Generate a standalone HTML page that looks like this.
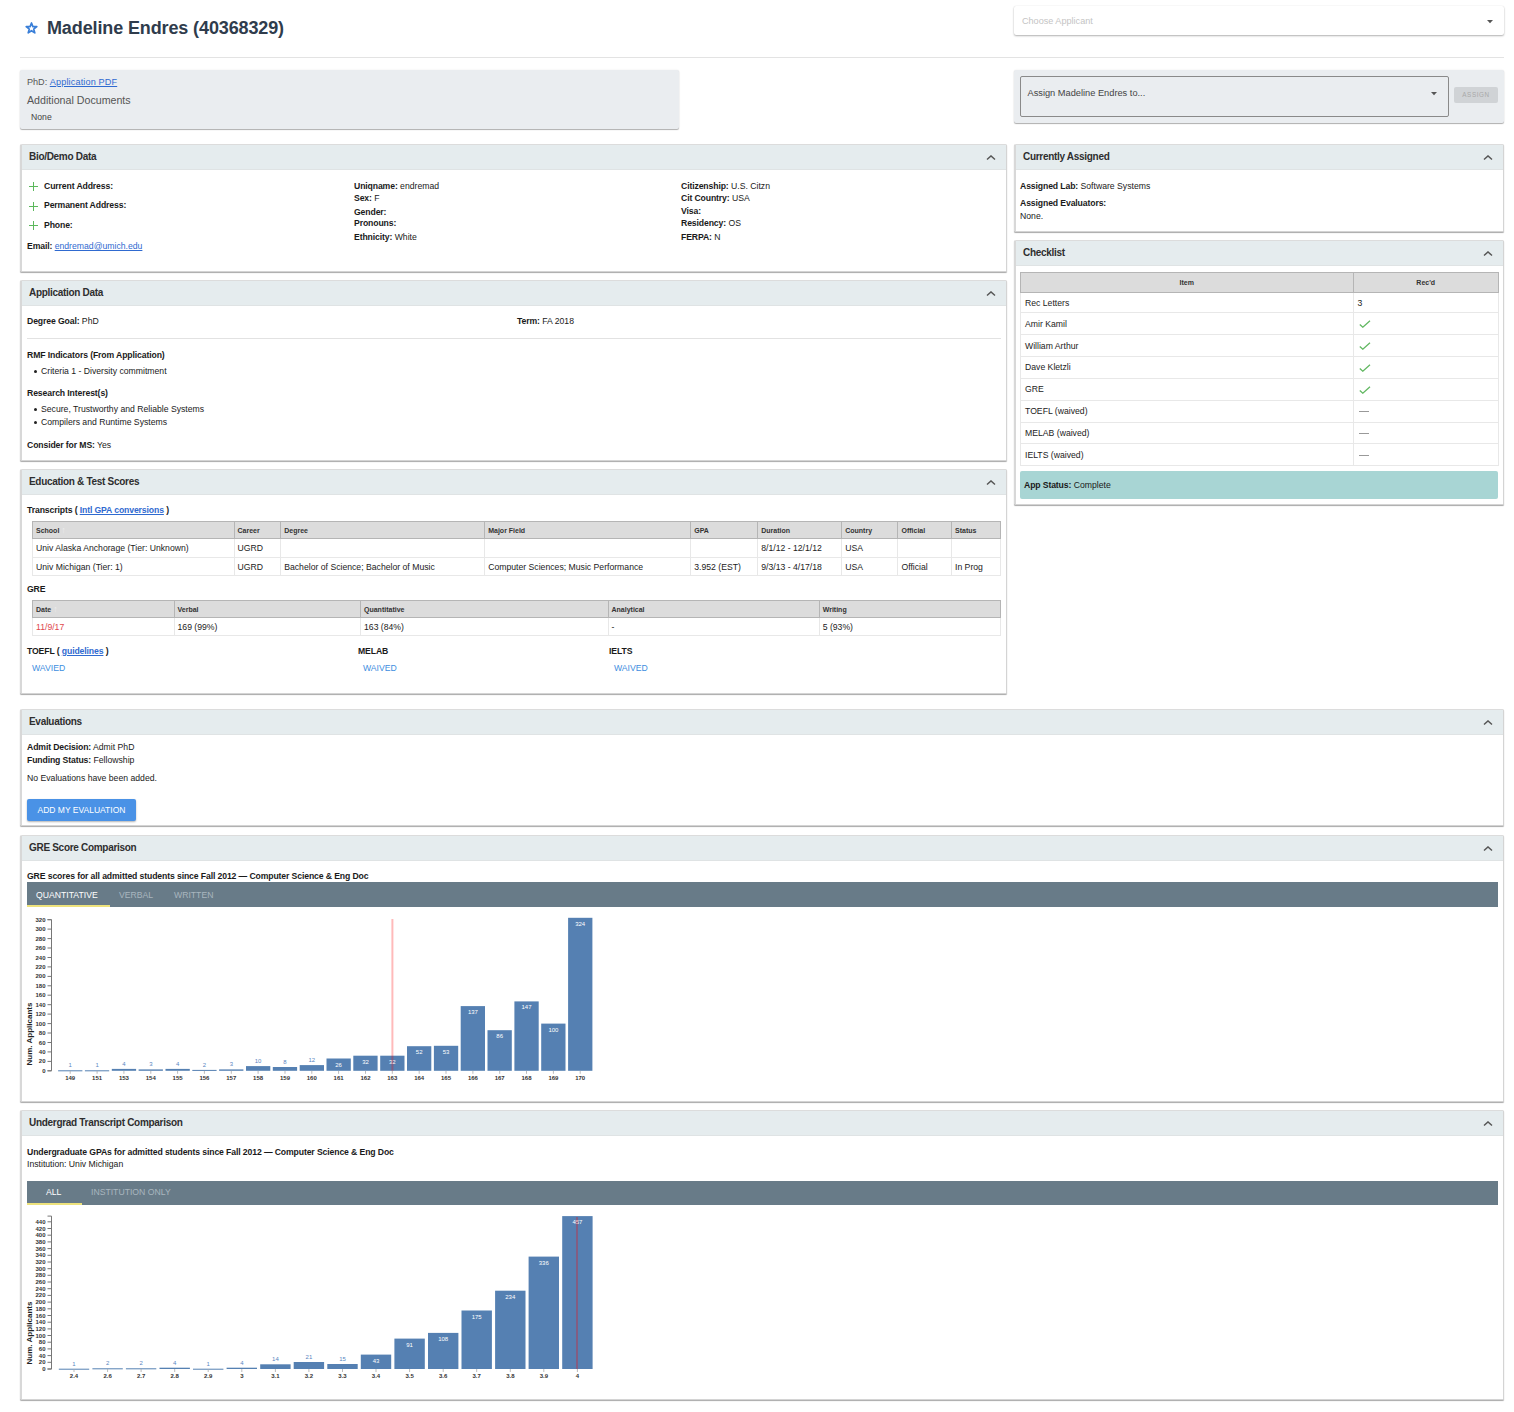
<!DOCTYPE html>
<html><head><meta charset="utf-8">
<style>
*{box-sizing:border-box;margin:0;padding:0}
html,body{width:1514px;height:1412px;overflow:hidden;background:#fff}
body{font-family:"Liberation Sans",sans-serif;color:#1a1a1a;font-size:8.67px;position:relative}
.a{position:absolute}
.t{position:absolute;white-space:nowrap;line-height:12px}
.b,b{font-weight:bold;letter-spacing:-.12px}
.lk{color:#2a64c8;text-decoration:underline}
.card{position:absolute;background:#fff;border:1px solid #d4d4d4;border-left:2px solid #d8d8d8;border-top-color:#dcdcdc;box-shadow:0 1px 1px rgba(0,0,0,.34);border-radius:1.5px}
.hd{position:absolute;left:0;top:0;right:0;height:25px;background:#e5ecee;border-bottom:1px solid #dfe3e4}
.hd span{position:absolute;left:7px;top:6.3px;line-height:12px;font-size:10px;font-weight:bold;color:#2e2e2e;letter-spacing:-.3px}
.hd .chev{position:absolute;top:9.5px;right:10.5px}
.grey{position:absolute;background:#eaedf0;border-radius:2px;box-shadow:0 1px 2px rgba(0,0,0,.25)}
.plus{position:absolute;width:9px;height:9px}
.plus:before{content:"";position:absolute;left:0;top:4px;width:9px;height:1.2px;background:#5cb85c}
.plus:after{content:"";position:absolute;left:4px;top:0;width:1.2px;height:9px;background:#5cb85c}
table{border-collapse:collapse;position:absolute;table-layout:fixed}
.tbl td,.tbl th{border:1px solid #e8e8e8;text-align:left;font-weight:normal;white-space:nowrap;overflow:hidden}
.tbl th{background:#dcdcdc;border-color:#b5b5b5;font-size:7px;font-weight:bold;color:#333;padding:0 3px}
.tbl td{font-size:8.67px;color:#222;padding:0 3px}
.ckl td{padding:0 4px}
.arr{color:#ececec;font-size:9px;line-height:1px;font-weight:normal}
.tabbar{position:absolute;background:#687b88}
.tab{position:absolute;color:#fff;font-size:8.67px;line-height:12px;white-space:nowrap}
.tab.off{color:#a9b6bf}
svg text{font-family:"Liberation Sans",sans-serif}
.tk{font-size:6px;fill:#333;font-weight:bold}
.vi{font-size:6px;fill:#fff}
.vo{font-size:6px;fill:#5a86bf}
</style></head><body>

<!-- title -->
<svg class="a" style="left:25px;top:21.5px" width="13" height="12" viewBox="0 0 13 12"><path d="M6.5,1 L7.9,4.6 L11.8,4.7 L8.7,7.1 L9.8,10.9 L6.5,8.7 L3.2,10.9 L4.3,7.1 L1.2,4.7 L5.1,4.6 Z" fill="none" stroke="#3a7fd8" stroke-width="1.7" stroke-linejoin="round"/></svg>
<div class="t b" style="left:47px;top:17.5px;line-height:20px;font-size:18px;color:#2f3c4c">Madeline Endres (40368329)</div>

<!-- choose applicant -->
<div class="a" style="left:1014px;top:6px;width:490px;height:29px;background:#fff;border-radius:2px;box-shadow:0 1px 2px rgba(0,0,0,.3),0 0 1px rgba(0,0,0,.12)"></div>
<div class="t" style="left:1022px;top:15px;font-size:9.1px;color:#c4c4c4">Choose Applicant</div>
<svg class="a" style="left:1487px;top:19.5px" width="6" height="4"><path d="M0,0H6L3,3.2Z" fill="#555"/></svg>

<!-- hr -->
<div class="a" style="left:20px;top:57px;width:1484px;height:1px;background:#e3e3e3"></div>

<!-- PhD box -->
<div class="grey" style="left:20px;top:70px;width:659px;height:59px;box-shadow:0 1px 1px rgba(0,0,0,.3),0 0 2px rgba(0,0,0,.08)"></div>
<div class="t" style="left:27px;top:76px;color:#555;font-size:9.1px">PhD: <span class="lk" style="color:#2f6ad0;letter-spacing:.15px">Application PDF</span></div>
<div class="t" style="left:27px;top:94px;font-size:10.67px;line-height:12px;color:#555">Additional Documents</div>
<div class="t" style="left:31px;top:110.5px;font-size:8.67px;color:#444">None</div>

<!-- assign box -->
<div class="grey" style="left:1014px;top:70px;width:490px;height:53px;box-shadow:0 1px 1px rgba(0,0,0,.3),0 0 2px rgba(0,0,0,.08)"></div>
<div class="a" style="left:1020px;top:76px;width:429px;height:41px;border:1.5px solid #8a8a8a;border-radius:2px"></div>
<div class="t" style="left:1027.5px;top:86.5px;font-size:9.25px;color:#444">Assign Madeline Endres to...</div>
<svg class="a" style="left:1431px;top:91.5px" width="6" height="4"><path d="M0,0H6L3,3.2Z" fill="#555"/></svg>
<div class="a" style="left:1454px;top:87px;width:44px;height:16px;background:#d0d3d6;border-radius:2px"></div>
<div class="t" style="left:1454px;top:89px;width:44px;text-align:center;font-size:6.3px;color:#a8a8a8;letter-spacing:.6px">ASSIGN</div>

<!-- Bio -->
<div class="card" style="left:20px;top:144px;width:987px;height:128px"><div class="hd"><span>Bio/Demo Data</span><svg class="chev" width="10" height="6" viewBox="0 0 10 6"><path d="M1,4.6 L5,0.9 L9,4.6" fill="none" stroke="#555" stroke-width="1.4"/></svg></div></div>
<div class="plus" style="left:29px;top:182px"></div>
<div class="plus" style="left:29px;top:202px"></div>
<div class="plus" style="left:29px;top:221px"></div>
<div class="t b" style="left:44px;top:180px">Current Address:</div>
<div class="t b" style="left:44px;top:199px">Permanent Address:</div>
<div class="t b" style="left:44px;top:219px">Phone:</div>
<div class="t" style="left:27px;top:240px"><b>Email:</b> <span class="lk" style="color:#2f6ad0">endremad@umich.edu</span></div>

<div class="t" style="left:354px;top:180px"><b>Uniqname:</b> endremad</div>
<div class="t" style="left:354px;top:192px"><b>Sex:</b> F</div>
<div class="t" style="left:354px;top:206px"><b>Gender:</b></div>
<div class="t" style="left:354px;top:217px"><b>Pronouns:</b></div>
<div class="t" style="left:354px;top:231px"><b>Ethnicity:</b> White</div>

<div class="t" style="left:681px;top:180px"><b>Citizenship:</b> U.S. Citzn</div>
<div class="t" style="left:681px;top:192px"><b>Cit Country:</b> USA</div>
<div class="t" style="left:681px;top:205px"><b>Visa:</b></div>
<div class="t" style="left:681px;top:217px"><b>Residency:</b> OS</div>
<div class="t" style="left:681px;top:231px"><b>FERPA:</b> N</div>

<!-- App data -->
<div class="card" style="left:20px;top:280px;width:987px;height:181px"><div class="hd"><span>Application Data</span><svg class="chev" width="10" height="6" viewBox="0 0 10 6"><path d="M1,4.6 L5,0.9 L9,4.6" fill="none" stroke="#555" stroke-width="1.4"/></svg></div></div>
<div class="t" style="left:27px;top:315px"><b>Degree Goal:</b> PhD</div>
<div class="t" style="left:517px;top:315px"><b>Term:</b> FA 2018</div>
<div class="a" style="left:27px;top:338px;width:974px;height:1px;background:#e2e2e2"></div>
<div class="t b" style="left:27px;top:349px">RMF Indicators (From Application)</div>
<div class="a" style="left:34px;top:370px;width:3px;height:3px;border-radius:50%;background:#222"></div>
<div class="t" style="left:41px;top:365px">Criteria 1 - Diversity commitment</div>
<div class="t b" style="left:27px;top:387px">Research Interest(s)</div>
<div class="a" style="left:34px;top:408px;width:3px;height:3px;border-radius:50%;background:#222"></div>
<div class="t" style="left:41px;top:403px">Secure, Trustworthy and Reliable Systems</div>
<div class="a" style="left:34px;top:421px;width:3px;height:3px;border-radius:50%;background:#222"></div>
<div class="t" style="left:41px;top:416px">Compilers and Runtime Systems</div>
<div class="t" style="left:27px;top:439px"><b>Consider for MS:</b> Yes</div>

<!-- Education -->
<div class="card" style="left:20px;top:469px;width:987px;height:225px"><div class="hd"><span>Education &amp; Test Scores</span><svg class="chev" width="10" height="6" viewBox="0 0 10 6"><path d="M1,4.6 L5,0.9 L9,4.6" fill="none" stroke="#555" stroke-width="1.4"/></svg></div></div>
<div class="t b" style="left:27px;top:504px">Transcripts ( <span class="lk" style="color:#2f6ad0">Intl GPA conversions</span> )</div>
<table class="tbl" style="left:32px;top:521px;width:968px">
<colgroup><col style="width:201.5px"><col style="width:46.7px"><col style="width:204px"><col style="width:206px"><col style="width:67px"><col style="width:84px"><col style="width:56.3px"><col style="width:53.5px"><col style="width:49px"></colgroup>
<tr style="height:17px"><th>School <span class="arr">&#8593;</span></th><th>Career</th><th>Degree</th><th>Major Field</th><th>GPA</th><th>Duration</th><th>Country</th><th>Official</th><th>Status</th></tr>
<tr style="height:19px"><td>Univ Alaska Anchorage (Tier: Unknown)</td><td>UGRD</td><td></td><td></td><td></td><td>8/1/12 - 12/1/12</td><td>USA</td><td></td><td></td></tr>
<tr style="height:18px"><td>Univ Michigan (Tier: 1)</td><td>UGRD</td><td>Bachelor of Science; Bachelor of Music</td><td>Computer Sciences; Music Performance</td><td>3.952 (EST)</td><td>9/3/13 - 4/17/18</td><td>USA</td><td>Official</td><td>In Prog</td></tr>
</table>
<div class="t b" style="left:27px;top:583px">GRE</div>
<table class="tbl" style="left:32px;top:600px;width:968px">
<colgroup><col style="width:141.5px"><col style="width:186.5px"><col style="width:247.5px"><col style="width:211.2px"><col style="width:181.3px"></colgroup>
<tr style="height:17px"><th>Date <span class="arr">&#8593;</span></th><th>Verbal</th><th>Quantitative</th><th>Analytical</th><th>Writing</th></tr>
<tr style="height:18px"><td style="color:#e0474c">11/9/17</td><td>169 (99%)</td><td>163 (84%)</td><td>-</td><td>5 (93%)</td></tr>
</table>
<div class="t b" style="left:27px;top:645px">TOEFL ( <span class="lk" style="color:#2f6ad0">guidelines</span> )</div>
<div class="t b" style="left:358px;top:645px">MELAB</div>
<div class="t b" style="left:609px;top:645px">IELTS</div>
<div class="t" style="left:32px;top:662px;color:#3d8ee0">WAVIED</div>
<div class="t" style="left:363px;top:662px;color:#3d8ee0">WAIVED</div>
<div class="t" style="left:614px;top:662px;color:#3d8ee0">WAIVED</div>

<!-- Currently assigned -->
<div class="card" style="left:1014px;top:144px;width:490px;height:88px"><div class="hd"><span>Currently Assigned</span><svg class="chev" width="10" height="6" viewBox="0 0 10 6"><path d="M1,4.6 L5,0.9 L9,4.6" fill="none" stroke="#555" stroke-width="1.4"/></svg></div></div>
<div class="t" style="left:1020px;top:180px"><b>Assigned Lab:</b> Software Systems</div>
<div class="t b" style="left:1020px;top:197px">Assigned Evaluators:</div>
<div class="t" style="left:1020px;top:210px">None.</div>

<!-- Checklist -->
<div class="card" style="left:1014px;top:240px;width:490px;height:265px"><div class="hd"><span>Checklist</span><svg class="chev" width="10" height="6" viewBox="0 0 10 6"><path d="M1,4.6 L5,0.9 L9,4.6" fill="none" stroke="#555" stroke-width="1.4"/></svg></div></div>
<table class="tbl ckl" style="left:1020px;top:272px;width:478px">
<colgroup><col style="width:332.5px"><col style="width:145.5px"></colgroup>
<tr style="height:20px"><th style="text-align:center;font-weight:bold;font-size:7px">Item</th><th style="text-align:center;font-weight:bold;font-size:7px">Rec'd</th></tr>
<tr style="height:20.3px"><td>Rec Letters</td><td>3</td></tr>
<tr style="height:21.85px"><td>Amir Kamil</td><td><svg width="12" height="8" style="vertical-align:middle;margin-left:1px"><path d="M0.8,4.6 L3.8,7.2 L11,0.8" fill="none" stroke="#62b862" stroke-width="1.3"/></svg></td></tr>
<tr style="height:21.85px"><td>William Arthur</td><td><svg width="12" height="8" style="vertical-align:middle;margin-left:1px"><path d="M0.8,4.6 L3.8,7.2 L11,0.8" fill="none" stroke="#62b862" stroke-width="1.3"/></svg></td></tr>
<tr style="height:21.85px"><td>Dave Kletzli</td><td><svg width="12" height="8" style="vertical-align:middle;margin-left:1px"><path d="M0.8,4.6 L3.8,7.2 L11,0.8" fill="none" stroke="#62b862" stroke-width="1.3"/></svg></td></tr>
<tr style="height:21.85px"><td>GRE</td><td><svg width="12" height="8" style="vertical-align:middle;margin-left:1px"><path d="M0.8,4.6 L3.8,7.2 L11,0.8" fill="none" stroke="#62b862" stroke-width="1.3"/></svg></td></tr>
<tr style="height:21.85px"><td>TOEFL (waived)</td><td><span style="display:inline-block;width:10px;height:1.2px;background:#999;vertical-align:middle;margin-left:1px"></span></td></tr>
<tr style="height:21.85px"><td>MELAB (waived)</td><td><span style="display:inline-block;width:10px;height:1.2px;background:#999;vertical-align:middle;margin-left:1px"></span></td></tr>
<tr style="height:21.85px"><td>IELTS (waived)</td><td><span style="display:inline-block;width:10px;height:1.2px;background:#999;vertical-align:middle;margin-left:1px"></span></td></tr>
</table>
<div class="a" style="left:1020px;top:471px;width:478px;height:28px;background:#a8d5d4;border-radius:2px"></div>
<div class="t" style="left:1024px;top:479px"><b>App Status:</b> Complete</div>

<!-- Evaluations -->
<div class="card" style="left:20px;top:709px;width:1484px;height:117px"><div class="hd"><span>Evaluations</span><svg class="chev" width="10" height="6" viewBox="0 0 10 6"><path d="M1,4.6 L5,0.9 L9,4.6" fill="none" stroke="#555" stroke-width="1.4"/></svg></div></div>
<div class="t" style="left:27px;top:741px"><b>Admit Decision:</b> Admit PhD</div>
<div class="t" style="left:27px;top:754px"><b>Funding Status:</b> Fellowship</div>
<div class="t" style="left:27px;top:772px">No Evaluations have been added.</div>
<div class="a" style="left:26.5px;top:799px;width:109.5px;height:22px;background:#4a92e6;border-radius:2px;box-shadow:0 1px 2px rgba(0,0,0,.3)"></div>
<div class="t" style="left:27px;top:804px;width:109px;text-align:center;color:#fff;font-size:8.5px">ADD MY EVALUATION</div>

<!-- GRE -->
<div class="card" style="left:20px;top:835px;width:1484px;height:267px"><div class="hd"><span>GRE Score Comparison</span><svg class="chev" width="10" height="6" viewBox="0 0 10 6"><path d="M1,4.6 L5,0.9 L9,4.6" fill="none" stroke="#555" stroke-width="1.4"/></svg></div></div>
<div class="t b" style="left:27px;top:870px">GRE scores for all admitted students since Fall 2012 — Computer Science &amp; Eng Doc</div>
<div class="tabbar" style="left:26.5px;top:882px;width:1471.5px;height:25px"></div>
<div class="a" style="left:26.5px;top:905px;width:83.5px;height:2px;background:#ede27c"></div>
<div class="tab" style="left:36px;top:889px">QUANTITATIVE</div>
<div class="tab off" style="left:119px;top:889px">VERBAL</div>
<div class="tab off" style="left:174px;top:889px">WRITTEN</div>
<svg class="a" style="left:0;top:0;overflow:visible" width="1" height="1">
<path d="M47.5,919.7H51.5V1070.8H47.5" fill="none" stroke="#777" stroke-width="1"/>
<line x1="47.5" y1="1070.8" x2="51.5" y2="1070.8" stroke="#777" stroke-width="1"/>
<text x="45.5" y="1072.8" text-anchor="end" class="tk">0</text>
<line x1="47.5" y1="1061.4" x2="51.5" y2="1061.4" stroke="#777" stroke-width="1"/>
<text x="45.5" y="1063.4" text-anchor="end" class="tk">20</text>
<line x1="47.5" y1="1051.9" x2="51.5" y2="1051.9" stroke="#777" stroke-width="1"/>
<text x="45.5" y="1053.9" text-anchor="end" class="tk">40</text>
<line x1="47.5" y1="1042.5" x2="51.5" y2="1042.5" stroke="#777" stroke-width="1"/>
<text x="45.5" y="1044.5" text-anchor="end" class="tk">60</text>
<line x1="47.5" y1="1033.0" x2="51.5" y2="1033.0" stroke="#777" stroke-width="1"/>
<text x="45.5" y="1035.0" text-anchor="end" class="tk">80</text>
<line x1="47.5" y1="1023.6" x2="51.5" y2="1023.6" stroke="#777" stroke-width="1"/>
<text x="45.5" y="1025.6" text-anchor="end" class="tk">100</text>
<line x1="47.5" y1="1014.1" x2="51.5" y2="1014.1" stroke="#777" stroke-width="1"/>
<text x="45.5" y="1016.1" text-anchor="end" class="tk">120</text>
<line x1="47.5" y1="1004.7" x2="51.5" y2="1004.7" stroke="#777" stroke-width="1"/>
<text x="45.5" y="1006.7" text-anchor="end" class="tk">140</text>
<line x1="47.5" y1="995.2" x2="51.5" y2="995.2" stroke="#777" stroke-width="1"/>
<text x="45.5" y="997.2" text-anchor="end" class="tk">160</text>
<line x1="47.5" y1="985.8" x2="51.5" y2="985.8" stroke="#777" stroke-width="1"/>
<text x="45.5" y="987.8" text-anchor="end" class="tk">180</text>
<line x1="47.5" y1="976.4" x2="51.5" y2="976.4" stroke="#777" stroke-width="1"/>
<text x="45.5" y="978.4" text-anchor="end" class="tk">200</text>
<line x1="47.5" y1="966.9" x2="51.5" y2="966.9" stroke="#777" stroke-width="1"/>
<text x="45.5" y="968.9" text-anchor="end" class="tk">220</text>
<line x1="47.5" y1="957.5" x2="51.5" y2="957.5" stroke="#777" stroke-width="1"/>
<text x="45.5" y="959.5" text-anchor="end" class="tk">240</text>
<line x1="47.5" y1="948.0" x2="51.5" y2="948.0" stroke="#777" stroke-width="1"/>
<text x="45.5" y="950.0" text-anchor="end" class="tk">260</text>
<line x1="47.5" y1="938.6" x2="51.5" y2="938.6" stroke="#777" stroke-width="1"/>
<text x="45.5" y="940.6" text-anchor="end" class="tk">280</text>
<line x1="47.5" y1="929.1" x2="51.5" y2="929.1" stroke="#777" stroke-width="1"/>
<text x="45.5" y="931.1" text-anchor="end" class="tk">300</text>
<line x1="47.5" y1="919.7" x2="51.5" y2="919.7" stroke="#777" stroke-width="1"/>
<text x="45.5" y="921.7" text-anchor="end" class="tk">320</text>
<rect x="58.1" y="1070.3" width="24.3" height="1.0" fill="#5580b2"/>
<line x1="70.2" y1="1070.8" x2="70.2" y2="1073.8" stroke="#aaa" stroke-width="0.8"/>
<text x="70.2" y="1079.8" text-anchor="middle" class="tk">149</text>
<text x="70.2" y="1067.3" text-anchor="middle" class="vo">1</text>
<rect x="84.9" y="1070.3" width="24.3" height="1.0" fill="#5580b2"/>
<line x1="97.1" y1="1070.8" x2="97.1" y2="1073.8" stroke="#aaa" stroke-width="0.8"/>
<text x="97.1" y="1079.8" text-anchor="middle" class="tk">151</text>
<text x="97.1" y="1067.3" text-anchor="middle" class="vo">1</text>
<rect x="111.8" y="1068.9" width="24.3" height="1.9" fill="#5580b2"/>
<line x1="123.9" y1="1070.8" x2="123.9" y2="1073.8" stroke="#aaa" stroke-width="0.8"/>
<text x="123.9" y="1079.8" text-anchor="middle" class="tk">153</text>
<text x="123.9" y="1065.9" text-anchor="middle" class="vo">4</text>
<rect x="138.6" y="1069.4" width="24.3" height="1.4" fill="#5580b2"/>
<line x1="150.8" y1="1070.8" x2="150.8" y2="1073.8" stroke="#aaa" stroke-width="0.8"/>
<text x="150.8" y="1079.8" text-anchor="middle" class="tk">154</text>
<text x="150.8" y="1066.4" text-anchor="middle" class="vo">3</text>
<rect x="165.5" y="1068.9" width="24.3" height="1.9" fill="#5580b2"/>
<line x1="177.6" y1="1070.8" x2="177.6" y2="1073.8" stroke="#aaa" stroke-width="0.8"/>
<text x="177.6" y="1079.8" text-anchor="middle" class="tk">155</text>
<text x="177.6" y="1065.9" text-anchor="middle" class="vo">4</text>
<rect x="192.3" y="1069.9" width="24.3" height="1.0" fill="#5580b2"/>
<line x1="204.4" y1="1070.8" x2="204.4" y2="1073.8" stroke="#aaa" stroke-width="0.8"/>
<text x="204.4" y="1079.8" text-anchor="middle" class="tk">156</text>
<text x="204.4" y="1066.9" text-anchor="middle" class="vo">2</text>
<rect x="219.1" y="1069.4" width="24.3" height="1.4" fill="#5580b2"/>
<line x1="231.3" y1="1070.8" x2="231.3" y2="1073.8" stroke="#aaa" stroke-width="0.8"/>
<text x="231.3" y="1079.8" text-anchor="middle" class="tk">157</text>
<text x="231.3" y="1066.4" text-anchor="middle" class="vo">3</text>
<rect x="246.0" y="1066.1" width="24.3" height="4.7" fill="#5580b2"/>
<line x1="258.1" y1="1070.8" x2="258.1" y2="1073.8" stroke="#aaa" stroke-width="0.8"/>
<text x="258.1" y="1079.8" text-anchor="middle" class="tk">158</text>
<text x="258.1" y="1063.1" text-anchor="middle" class="vo">10</text>
<rect x="272.8" y="1067.0" width="24.3" height="3.8" fill="#5580b2"/>
<line x1="285.0" y1="1070.8" x2="285.0" y2="1073.8" stroke="#aaa" stroke-width="0.8"/>
<text x="285.0" y="1079.8" text-anchor="middle" class="tk">159</text>
<text x="285.0" y="1064.0" text-anchor="middle" class="vo">8</text>
<rect x="299.7" y="1065.1" width="24.3" height="5.7" fill="#5580b2"/>
<line x1="311.8" y1="1070.8" x2="311.8" y2="1073.8" stroke="#aaa" stroke-width="0.8"/>
<text x="311.8" y="1079.8" text-anchor="middle" class="tk">160</text>
<text x="311.8" y="1062.1" text-anchor="middle" class="vo">12</text>
<rect x="326.5" y="1058.5" width="24.3" height="12.3" fill="#5580b2"/>
<line x1="338.6" y1="1070.8" x2="338.6" y2="1073.8" stroke="#aaa" stroke-width="0.8"/>
<text x="338.6" y="1079.8" text-anchor="middle" class="tk">161</text>
<text x="338.6" y="1066.5" text-anchor="middle" class="vi">26</text>
<rect x="353.3" y="1055.7" width="24.3" height="15.1" fill="#5580b2"/>
<line x1="365.5" y1="1070.8" x2="365.5" y2="1073.8" stroke="#aaa" stroke-width="0.8"/>
<text x="365.5" y="1079.8" text-anchor="middle" class="tk">162</text>
<text x="365.5" y="1063.7" text-anchor="middle" class="vi">32</text>
<rect x="380.2" y="1055.7" width="24.3" height="15.1" fill="#5580b2"/>
<line x1="392.3" y1="1070.8" x2="392.3" y2="1073.8" stroke="#aaa" stroke-width="0.8"/>
<text x="392.3" y="1079.8" text-anchor="middle" class="tk">163</text>
<text x="392.3" y="1063.7" text-anchor="middle" class="vi">32</text>
<rect x="407.0" y="1046.2" width="24.3" height="24.6" fill="#5580b2"/>
<line x1="419.2" y1="1070.8" x2="419.2" y2="1073.8" stroke="#aaa" stroke-width="0.8"/>
<text x="419.2" y="1079.8" text-anchor="middle" class="tk">164</text>
<text x="419.2" y="1054.2" text-anchor="middle" class="vi">52</text>
<rect x="433.9" y="1045.8" width="24.3" height="25.0" fill="#5580b2"/>
<line x1="446.0" y1="1070.8" x2="446.0" y2="1073.8" stroke="#aaa" stroke-width="0.8"/>
<text x="446.0" y="1079.8" text-anchor="middle" class="tk">165</text>
<text x="446.0" y="1053.8" text-anchor="middle" class="vi">53</text>
<rect x="460.7" y="1006.1" width="24.3" height="64.7" fill="#5580b2"/>
<line x1="472.9" y1="1070.8" x2="472.9" y2="1073.8" stroke="#aaa" stroke-width="0.8"/>
<text x="472.9" y="1079.8" text-anchor="middle" class="tk">166</text>
<text x="472.9" y="1014.1" text-anchor="middle" class="vi">137</text>
<rect x="487.5" y="1030.2" width="24.3" height="40.6" fill="#5580b2"/>
<line x1="499.7" y1="1070.8" x2="499.7" y2="1073.8" stroke="#aaa" stroke-width="0.8"/>
<text x="499.7" y="1079.8" text-anchor="middle" class="tk">167</text>
<text x="499.7" y="1038.2" text-anchor="middle" class="vi">86</text>
<rect x="514.4" y="1001.4" width="24.3" height="69.4" fill="#5580b2"/>
<line x1="526.5" y1="1070.8" x2="526.5" y2="1073.8" stroke="#aaa" stroke-width="0.8"/>
<text x="526.5" y="1079.8" text-anchor="middle" class="tk">168</text>
<text x="526.5" y="1009.4" text-anchor="middle" class="vi">147</text>
<rect x="541.2" y="1023.6" width="24.3" height="47.2" fill="#5580b2"/>
<line x1="553.4" y1="1070.8" x2="553.4" y2="1073.8" stroke="#aaa" stroke-width="0.8"/>
<text x="553.4" y="1079.8" text-anchor="middle" class="tk">169</text>
<text x="553.4" y="1031.6" text-anchor="middle" class="vi">100</text>
<rect x="568.1" y="917.8" width="24.3" height="153.0" fill="#5580b2"/>
<line x1="580.2" y1="1070.8" x2="580.2" y2="1073.8" stroke="#aaa" stroke-width="0.8"/>
<text x="580.2" y="1079.8" text-anchor="middle" class="tk">170</text>
<text x="580.2" y="925.8" text-anchor="middle" class="vi">324</text>
<line x1="392.4" y1="919" x2="392.4" y2="1070.8" stroke="rgba(255,0,0,0.27)" stroke-width="2"/>
<text transform="translate(32,1034) rotate(-90)" text-anchor="middle" style="font-size:8px;font-weight:bold;fill:#222">Num. Applicants</text>
</svg>

<!-- Undergrad -->
<div class="card" style="left:20px;top:1110px;width:1484px;height:290px"><div class="hd"><span>Undergrad Transcript Comparison</span><svg class="chev" width="10" height="6" viewBox="0 0 10 6"><path d="M1,4.6 L5,0.9 L9,4.6" fill="none" stroke="#555" stroke-width="1.4"/></svg></div></div>
<div class="t b" style="left:27px;top:1146px">Undergraduate GPAs for admitted students since Fall 2012 — Computer Science &amp; Eng Doc</div>
<div class="t" style="left:27px;top:1158px">Institution: Univ Michigan</div>
<div class="tabbar" style="left:26.5px;top:1181px;width:1471.5px;height:24px"></div>
<div class="a" style="left:26.5px;top:1203px;width:55px;height:2px;background:#ede27c"></div>
<div class="tab" style="left:46px;top:1186px">ALL</div>
<div class="tab off" style="left:91px;top:1186px">INSTITUTION ONLY</div>
<svg class="a" style="left:0;top:0;overflow:visible" width="1" height="1">
<path d="M47.5,1216.1H51.5V1369H47.5" fill="none" stroke="#777" stroke-width="1"/>
<line x1="47.5" y1="1369.0" x2="51.5" y2="1369.0" stroke="#777" stroke-width="1"/>
<text x="45.5" y="1371.0" text-anchor="end" class="tk">0</text>
<line x1="47.5" y1="1362.3" x2="51.5" y2="1362.3" stroke="#777" stroke-width="1"/>
<text x="45.5" y="1364.3" text-anchor="end" class="tk">20</text>
<line x1="47.5" y1="1355.6" x2="51.5" y2="1355.6" stroke="#777" stroke-width="1"/>
<text x="45.5" y="1357.6" text-anchor="end" class="tk">40</text>
<line x1="47.5" y1="1348.9" x2="51.5" y2="1348.9" stroke="#777" stroke-width="1"/>
<text x="45.5" y="1350.9" text-anchor="end" class="tk">60</text>
<line x1="47.5" y1="1342.2" x2="51.5" y2="1342.2" stroke="#777" stroke-width="1"/>
<text x="45.5" y="1344.2" text-anchor="end" class="tk">80</text>
<line x1="47.5" y1="1335.5" x2="51.5" y2="1335.5" stroke="#777" stroke-width="1"/>
<text x="45.5" y="1337.5" text-anchor="end" class="tk">100</text>
<line x1="47.5" y1="1328.9" x2="51.5" y2="1328.9" stroke="#777" stroke-width="1"/>
<text x="45.5" y="1330.9" text-anchor="end" class="tk">120</text>
<line x1="47.5" y1="1322.2" x2="51.5" y2="1322.2" stroke="#777" stroke-width="1"/>
<text x="45.5" y="1324.2" text-anchor="end" class="tk">140</text>
<line x1="47.5" y1="1315.5" x2="51.5" y2="1315.5" stroke="#777" stroke-width="1"/>
<text x="45.5" y="1317.5" text-anchor="end" class="tk">160</text>
<line x1="47.5" y1="1308.8" x2="51.5" y2="1308.8" stroke="#777" stroke-width="1"/>
<text x="45.5" y="1310.8" text-anchor="end" class="tk">180</text>
<line x1="47.5" y1="1302.1" x2="51.5" y2="1302.1" stroke="#777" stroke-width="1"/>
<text x="45.5" y="1304.1" text-anchor="end" class="tk">200</text>
<line x1="47.5" y1="1295.4" x2="51.5" y2="1295.4" stroke="#777" stroke-width="1"/>
<text x="45.5" y="1297.4" text-anchor="end" class="tk">220</text>
<line x1="47.5" y1="1288.7" x2="51.5" y2="1288.7" stroke="#777" stroke-width="1"/>
<text x="45.5" y="1290.7" text-anchor="end" class="tk">240</text>
<line x1="47.5" y1="1282.0" x2="51.5" y2="1282.0" stroke="#777" stroke-width="1"/>
<text x="45.5" y="1284.0" text-anchor="end" class="tk">260</text>
<line x1="47.5" y1="1275.3" x2="51.5" y2="1275.3" stroke="#777" stroke-width="1"/>
<text x="45.5" y="1277.3" text-anchor="end" class="tk">280</text>
<line x1="47.5" y1="1268.7" x2="51.5" y2="1268.7" stroke="#777" stroke-width="1"/>
<text x="45.5" y="1270.7" text-anchor="end" class="tk">300</text>
<line x1="47.5" y1="1262.0" x2="51.5" y2="1262.0" stroke="#777" stroke-width="1"/>
<text x="45.5" y="1264.0" text-anchor="end" class="tk">320</text>
<line x1="47.5" y1="1255.3" x2="51.5" y2="1255.3" stroke="#777" stroke-width="1"/>
<text x="45.5" y="1257.3" text-anchor="end" class="tk">340</text>
<line x1="47.5" y1="1248.6" x2="51.5" y2="1248.6" stroke="#777" stroke-width="1"/>
<text x="45.5" y="1250.6" text-anchor="end" class="tk">360</text>
<line x1="47.5" y1="1241.9" x2="51.5" y2="1241.9" stroke="#777" stroke-width="1"/>
<text x="45.5" y="1243.9" text-anchor="end" class="tk">380</text>
<line x1="47.5" y1="1235.2" x2="51.5" y2="1235.2" stroke="#777" stroke-width="1"/>
<text x="45.5" y="1237.2" text-anchor="end" class="tk">400</text>
<line x1="47.5" y1="1228.5" x2="51.5" y2="1228.5" stroke="#777" stroke-width="1"/>
<text x="45.5" y="1230.5" text-anchor="end" class="tk">420</text>
<line x1="47.5" y1="1221.8" x2="51.5" y2="1221.8" stroke="#777" stroke-width="1"/>
<text x="45.5" y="1223.8" text-anchor="end" class="tk">440</text>
<rect x="58.8" y="1368.7" width="30.4" height="1.0" fill="#5580b2"/>
<line x1="74.0" y1="1369" x2="74.0" y2="1372" stroke="#aaa" stroke-width="0.8"/>
<text x="74.0" y="1378.0" text-anchor="middle" class="tk">2.4</text>
<text x="74.0" y="1365.7" text-anchor="middle" class="vo">1</text>
<rect x="92.4" y="1368.3" width="30.4" height="1.0" fill="#5580b2"/>
<line x1="107.6" y1="1369" x2="107.6" y2="1372" stroke="#aaa" stroke-width="0.8"/>
<text x="107.6" y="1378.0" text-anchor="middle" class="tk">2.6</text>
<text x="107.6" y="1365.3" text-anchor="middle" class="vo">2</text>
<rect x="125.9" y="1368.3" width="30.4" height="1.0" fill="#5580b2"/>
<line x1="141.1" y1="1369" x2="141.1" y2="1372" stroke="#aaa" stroke-width="0.8"/>
<text x="141.1" y="1378.0" text-anchor="middle" class="tk">2.7</text>
<text x="141.1" y="1365.3" text-anchor="middle" class="vo">2</text>
<rect x="159.5" y="1367.7" width="30.4" height="1.3" fill="#5580b2"/>
<line x1="174.7" y1="1369" x2="174.7" y2="1372" stroke="#aaa" stroke-width="0.8"/>
<text x="174.7" y="1378.0" text-anchor="middle" class="tk">2.8</text>
<text x="174.7" y="1364.7" text-anchor="middle" class="vo">4</text>
<rect x="193.0" y="1368.7" width="30.4" height="1.0" fill="#5580b2"/>
<line x1="208.2" y1="1369" x2="208.2" y2="1372" stroke="#aaa" stroke-width="0.8"/>
<text x="208.2" y="1378.0" text-anchor="middle" class="tk">2.9</text>
<text x="208.2" y="1365.7" text-anchor="middle" class="vo">1</text>
<rect x="226.6" y="1367.7" width="30.4" height="1.3" fill="#5580b2"/>
<line x1="241.8" y1="1369" x2="241.8" y2="1372" stroke="#aaa" stroke-width="0.8"/>
<text x="241.8" y="1378.0" text-anchor="middle" class="tk">3</text>
<text x="241.8" y="1364.7" text-anchor="middle" class="vo">4</text>
<rect x="260.2" y="1364.3" width="30.4" height="4.7" fill="#5580b2"/>
<line x1="275.4" y1="1369" x2="275.4" y2="1372" stroke="#aaa" stroke-width="0.8"/>
<text x="275.4" y="1378.0" text-anchor="middle" class="tk">3.1</text>
<text x="275.4" y="1361.3" text-anchor="middle" class="vo">14</text>
<rect x="293.7" y="1362.0" width="30.4" height="7.0" fill="#5580b2"/>
<line x1="308.9" y1="1369" x2="308.9" y2="1372" stroke="#aaa" stroke-width="0.8"/>
<text x="308.9" y="1378.0" text-anchor="middle" class="tk">3.2</text>
<text x="308.9" y="1359.0" text-anchor="middle" class="vo">21</text>
<rect x="327.3" y="1364.0" width="30.4" height="5.0" fill="#5580b2"/>
<line x1="342.5" y1="1369" x2="342.5" y2="1372" stroke="#aaa" stroke-width="0.8"/>
<text x="342.5" y="1378.0" text-anchor="middle" class="tk">3.3</text>
<text x="342.5" y="1361.0" text-anchor="middle" class="vo">15</text>
<rect x="360.8" y="1354.6" width="30.4" height="14.4" fill="#5580b2"/>
<line x1="376.0" y1="1369" x2="376.0" y2="1372" stroke="#aaa" stroke-width="0.8"/>
<text x="376.0" y="1378.0" text-anchor="middle" class="tk">3.4</text>
<text x="376.0" y="1362.6" text-anchor="middle" class="vi">43</text>
<rect x="394.4" y="1338.6" width="30.4" height="30.4" fill="#5580b2"/>
<line x1="409.6" y1="1369" x2="409.6" y2="1372" stroke="#aaa" stroke-width="0.8"/>
<text x="409.6" y="1378.0" text-anchor="middle" class="tk">3.5</text>
<text x="409.6" y="1346.6" text-anchor="middle" class="vi">91</text>
<rect x="428.0" y="1332.9" width="30.4" height="36.1" fill="#5580b2"/>
<line x1="443.2" y1="1369" x2="443.2" y2="1372" stroke="#aaa" stroke-width="0.8"/>
<text x="443.2" y="1378.0" text-anchor="middle" class="tk">3.6</text>
<text x="443.2" y="1340.9" text-anchor="middle" class="vi">108</text>
<rect x="461.5" y="1310.5" width="30.4" height="58.5" fill="#5580b2"/>
<line x1="476.7" y1="1369" x2="476.7" y2="1372" stroke="#aaa" stroke-width="0.8"/>
<text x="476.7" y="1378.0" text-anchor="middle" class="tk">3.7</text>
<text x="476.7" y="1318.5" text-anchor="middle" class="vi">175</text>
<rect x="495.1" y="1290.7" width="30.4" height="78.3" fill="#5580b2"/>
<line x1="510.3" y1="1369" x2="510.3" y2="1372" stroke="#aaa" stroke-width="0.8"/>
<text x="510.3" y="1378.0" text-anchor="middle" class="tk">3.8</text>
<text x="510.3" y="1298.7" text-anchor="middle" class="vi">234</text>
<rect x="528.6" y="1256.6" width="30.4" height="112.4" fill="#5580b2"/>
<line x1="543.8" y1="1369" x2="543.8" y2="1372" stroke="#aaa" stroke-width="0.8"/>
<text x="543.8" y="1378.0" text-anchor="middle" class="tk">3.9</text>
<text x="543.8" y="1264.6" text-anchor="middle" class="vi">336</text>
<rect x="562.2" y="1216.1" width="30.4" height="152.9" fill="#5580b2"/>
<line x1="577.4" y1="1369" x2="577.4" y2="1372" stroke="#aaa" stroke-width="0.8"/>
<text x="577.4" y="1378.0" text-anchor="middle" class="tk">4</text>
<text x="577.4" y="1224.1" text-anchor="middle" class="vi">457</text>
<line x1="577" y1="1217" x2="577" y2="1369" stroke="rgba(255,0,0,0.27)" stroke-width="2"/>
<text transform="translate(32,1333) rotate(-90)" text-anchor="middle" style="font-size:8px;font-weight:bold;fill:#222">Num. Applicants</text>
</svg>

</body></html>
